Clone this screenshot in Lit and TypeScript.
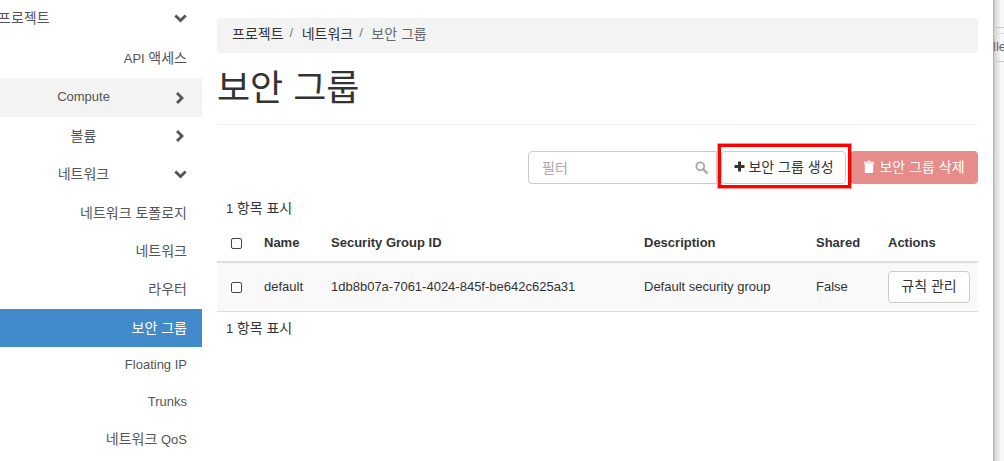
import { LitElement, html, css, svg } from "lit";
import { customElement } from "lit/decorators.js";

const chevDown = svg`<path d="M0.3 4.4 L2.3 2.4 L6.5 6.6 L10.7 2.4 L12.7 4.4 L6.5 10.6 Z" fill="#555"/>`;
const chevRight = svg`<path d="M4 1 L10 7 L4 13 L2 11 L6 7 L2 3 Z" fill="#555"/>`;

const nav = [
  { t: "프로젝트", h: 39, icon: "down", cls: "top" },
  { t: "API 액세스", h: 39, cls: "" },
  { t: "Compute", h: 39, icon: "right", cls: "hover" },
  { t: "볼륨", h: 38, icon: "right", cls: "" },
  { t: "네트워크", h: 39, icon: "down", cls: "" },
  { t: "네트워크 토폴로지", h: 38, cls: "" },
  { t: "네트워크", h: 38, cls: "" },
  { t: "라우터", h: 39, cls: "" },
  { t: "보안 그룹", h: 38, cls: "active" },
  { t: "Floating IP", h: 37, cls: "" },
  { t: "Trunks", h: 37, cls: "" },
  { t: "네트워크 QoS", h: 37, cls: "" },
];

/** Hangul runs render a step larger than the Latin text, as in the reference's fallback font. */
const ko = (t: string) =>
  t.split(/([가-힣](?:[가-힣 ]*[가-힣])?)/).map((part) =>
    /[가-힣]/.test(part) ? html`<span class="ko">${part}</span>` : part
  );

@customElement("app-root")
export class AppRoot extends LitElement {
  static styles = css`
    :host {
      display: block;
      width: 1004px;
      height: 461px;
      overflow: hidden;
      position: relative;
      background: #fff;
      font-family: "Liberation Sans", "Noto Sans CJK KR", sans-serif;
      font-size: 13px;
      color: #333;
    }
    .ko { font-size: 14px; }
    .page { display: flex; width: 1004px; height: 461px; }
    .side { width: 202px; flex: none; }
    .nav { display: flex; align-items: center; color: #555; white-space: nowrap; box-sizing: border-box; padding-bottom: 3px; }
    .nav.top { padding-bottom: 5px; }
    .nav.hover { background: #f3f3f3; }
    .nav.active { background: #428bca; color: #fff; }
    .nav .label { flex: 1; text-align: right; padding-right: 15px; }
    .nav .lbl-top { margin-left: -2px; flex: 1; }
    .nav .lbl-mid { flex: 1; text-align: center; padding-right: 7px; }
    .nav .ico { width: 13px; height: 14px; margin: 3px 15px 0 0; flex: none; display: block; }

    .main { width: 791px; flex: none; box-sizing: border-box; padding: 18px 15px 0 15px; }
    .crumb {
      width: 761px; height: 35px; box-sizing: border-box; background: #f3f3f3; border-radius: 4px;
      display: flex; align-items: center; padding: 0 15px 6px; color: #333; white-space: pre;
    }
    .crumb .cur { color: #666; }
    .crumb .sep { color: #777; margin: 0 8.5px 0 6px; }
    h1 { margin: 14px 0 0 0; font-size: 36px; font-weight: 400; line-height: 44px; height: 44px; color: #333; }
    hr { border: 0; border-top: 1px solid #eee; margin: 13px 0 0 0; }
    .tools { display: flex; margin-top: 26px; height: 33px; position: relative; }
    .search {
      margin-left: 311px; width: 189px; height: 33px; box-sizing: border-box; border: 1px solid #ccc;
      border-radius: 4px 0 0 4px; display: flex; align-items: center; justify-content: space-between;
      padding: 0 8px 1px 13px; color: #a9a9a9;
    }
    .btn {
      height: 33px; box-sizing: border-box; border-radius: 4px; border: 1px solid #ccc; background: #fff;
      display: flex; align-items: center; justify-content: center; gap: 3px; color: #333; white-space: nowrap;
      padding-bottom: 4px;
    }
    .btn svg { margin-top: 2px; }
    .btn.create { width: 125px; margin-left: 4px; padding-left: 1px; }
    .btn.del { width: 128px; margin-left: 4px; gap: 4px; background: #e68c8a; border-color: #e68c8a; color: #fff; }
    .mark {
      position: absolute; left: 501px; top: -7px; width: 133px; height: 44px;
      box-sizing: border-box; border: 3px solid #f00; box-shadow: 0 0 0 1px rgba(255, 0, 0, 0.4); pointer-events: none;
    }
    .count { padding-left: 9px; height: 18px; line-height: 18px; color: #333; }
    .count.a { margin-top: 15px; }
    .count.b { margin-top: 7px; }
    table { border-collapse: collapse; width: 761px; table-layout: fixed; margin-top: 9px; }
    th { text-align: left; font-weight: 700; height: 33px; padding: 0 0 2px; border-bottom: 2px solid #ddd; color: #333; }
    td { height: 46px; padding: 0 0 2px; background: #f9f9f9; border-bottom: 1px solid #ddd; color: #333; }
    th.box, td.box { padding: 0; }
    td.act { padding: 0; }
    .chk { display: block; margin-left: 14px; width: 11px; height: 11px; box-sizing: border-box; border: 1px solid #444; border-radius: 2px; background: #fff; }
    .manage { width: 82px; height: 32px; }

    .edge { width: 11px; flex: none; position: relative; background: #f6f7f9; }
    .shadow { position: absolute; left: 0; top: 0; bottom: 0; width: 7px; background: linear-gradient(90deg, #a8a8a8 0, #d8d8d8 2px, #efefef 7px); }
    .edge .l1, .edge .l2, .edge .l3 { position: absolute; left: 0; right: 0; height: 1px; background: #c9c9c9; }
    .edge .l1 { top: 27px; } .edge .l2 { top: 33px; background: #ddd; } .edge .l3 { top: 61px; }
    .edge .txt { position: absolute; top: 40px; left: 0; color: #666; font-size: 13px; line-height: 14px; }
  `;

  private row(n: (typeof nav)[number]) {
    const style = `height:${n.h}px`;
    if (n.icon) {
      const first = n.cls === "top";
      return html`<div class="nav ${n.cls}" style=${style}>
        <span class=${first ? "lbl-top" : "lbl-mid"}>${ko(n.t)}</span>
        <svg class="ico" viewBox="0 0 13 14">${n.icon === "down" ? chevDown : chevRight}</svg>
      </div>`;
    }
    return html`<div class="nav ${n.cls}" style=${style}><span class="label">${ko(n.t)}</span></div>`;
  }

  render() {
    return html`<div class="page">
      <div class="side">${nav.map((n) => this.row(n))}</div>
      <div class="main">
        <div class="crumb"><span class="ko">프로젝트</span><span class="sep">/</span><span class="ko">네트워크</span><span class="sep">/</span><span class="ko cur">보안 그룹</span></div>
        <h1>보안 그룹</h1>
        <hr />
        <div class="tools">
          <div class="search"><span class="ko">필터</span>
            <svg width="13" height="13" viewBox="0 0 13 13"><circle cx="5.3" cy="5.3" r="3.9" fill="none" stroke="#aaa" stroke-width="1.9"/><path d="M8.2 8.2 L12 12" stroke="#aaa" stroke-width="2.4" stroke-linecap="round"/></svg>
          </div>
          <div class="btn create">
            <svg width="11" height="11" viewBox="0 0 11 11"><path d="M4 0.5h3v3.5h3.5v3H7v3.5H4V7H0.5V4H4z" fill="#333"/></svg>
            <span class="ko">보안 그룹 생성</span>
          </div>
          <div class="btn del">
            <svg width="12" height="13" viewBox="0 0 11 12"><path d="M1 3h9v1H9.4v7a1 1 0 0 1-1 1H2.6a1 1 0 0 1-1-1V4H1zM3.7 1.6 4.3.6h2.4l.6 1h3v1H.8v-1z" fill="#fff"/></svg>
            <span class="ko">보안 그룹 삭제</span>
          </div>
          <div class="mark"></div>
        </div>
        <div class="count a">${ko("1 항목 표시")}</div>
        <table>
          <colgroup><col style="width:47px"/><col style="width:67px"/><col style="width:313px"/><col style="width:172px"/><col style="width:72px"/><col/></colgroup>
          <thead><tr><th class="box"><span class="chk"></span></th><th>Name</th><th>Security Group ID</th><th>Description</th><th>Shared</th><th>Actions</th></tr></thead>
          <tbody><tr>
            <td class="box"><span class="chk"></span></td><td>default</td><td>1db8b07a-7061-4024-845f-be642c625a31</td><td>Default security group</td><td>False</td>
            <td class="act"><div class="btn manage"><span class="ko">규칙 관리</span></div></td>
          </tr></tbody>
        </table>
        <div class="count b">${ko("1 항목 표시")}</div>
      </div>
      <div class="edge"><div class="shadow"></div><div class="l1"></div><div class="l2"></div><div class="l3"></div><div class="txt">lle</div></div>
    </div>`;
  }
}
